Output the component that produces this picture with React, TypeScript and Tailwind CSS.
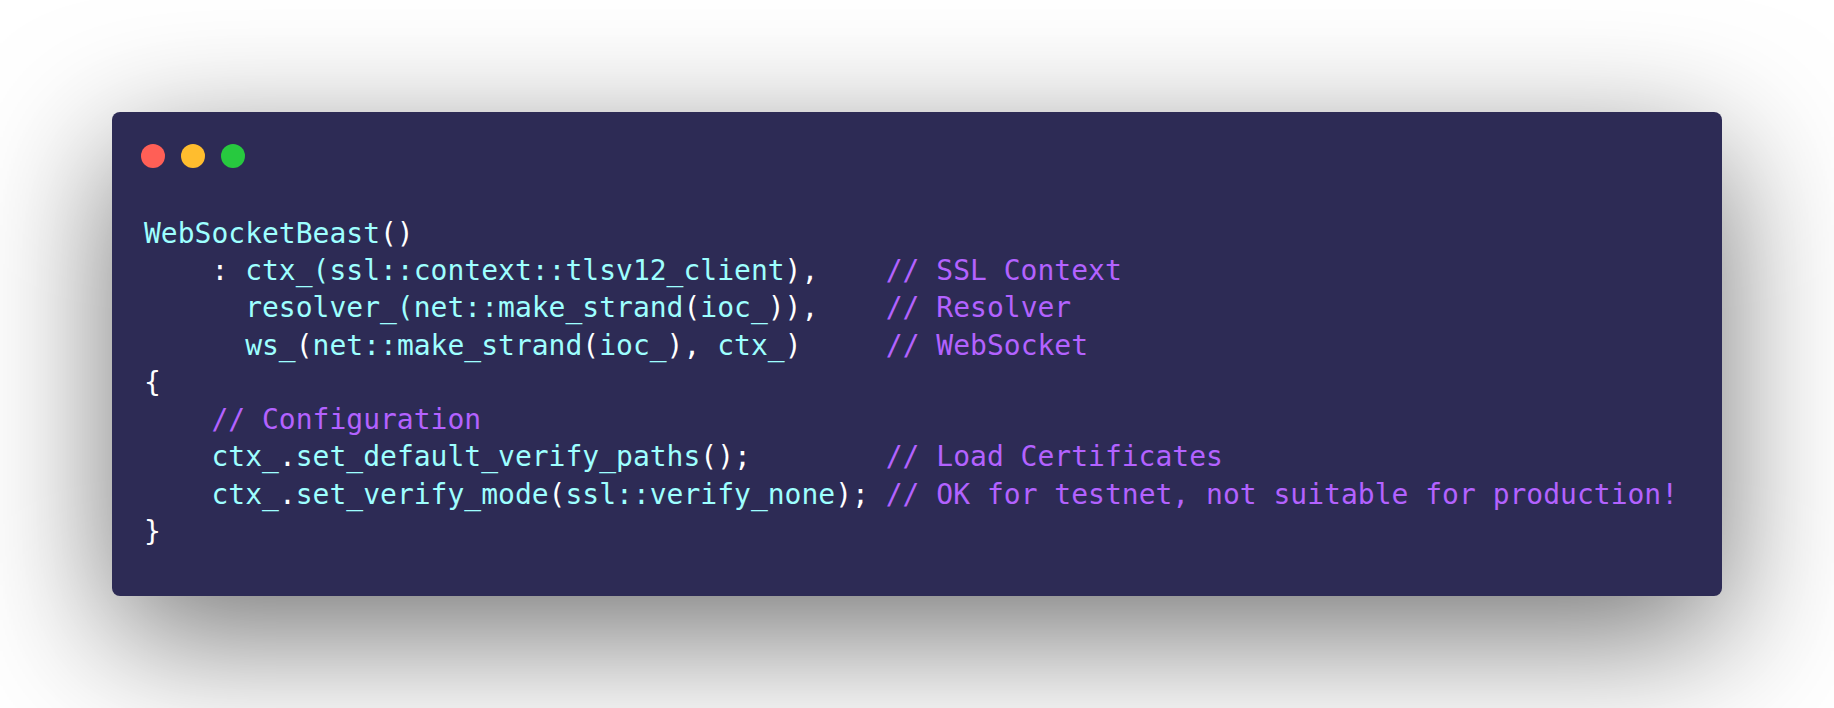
const C = ({ children }: { children: React.ReactNode }) => (
  <span className="text-[#9effff]">{children}</span>
);
const P = ({ children }: { children: React.ReactNode }) => (
  <span className="text-white">{children}</span>
);
const K = ({ children }: { children: React.ReactNode }) => (
  <span className="text-[#b362ff]">{children}</span>
);

function App() {
  return (
    <div className="min-h-[708px] w-[1834px] bg-white pl-[112px] pt-[112px]">
      {/* Window */}
      <div className="h-[484px] w-[1610px] rounded-[8px] bg-[#2d2b55] shadow-[0_40px_136px_rgba(0,0,0,0.55)]">
        {/* Traffic lights */}
        <div className="flex gap-4 pl-[29px] pt-8">
          <div className="h-6 w-6 rounded-full bg-[#ff5f56]" />
          <div className="h-6 w-6 rounded-full bg-[#ffbd2e]" />
          <div className="h-6 w-6 rounded-full bg-[#27c93f]" />
        </div>

        {/* Code */}
        <pre className="mt-[47px] pl-8 font-['DejaVu_Sans_Mono',monospace] text-[28px] leading-[37.24px] whitespace-pre">
          <div>
            <C>WebSocketBeast</C>
            <P>()</P>
          </div>
          <div>
            <P>{"    : "}</P>
            <C>ctx_(ssl::context::tlsv12_client</C>
            <P>{"),    "}</P>
            <K>// SSL Context</K>
          </div>
          <div>
            <P>{"      "}</P>
            <C>resolver_(net::make_strand</C>
            <P>(</P>
            <C>ioc_</C>
            <P>{")),    "}</P>
            <K>// Resolver</K>
          </div>
          <div>
            <P>{"      "}</P>
            <C>ws_</C>
            <P>(</P>
            <C>net::make_strand</C>
            <P>(</P>
            <C>ioc_</C>
            <P>{"), "}</P>
            <C>ctx_</C>
            <P>{")     "}</P>
            <K>// WebSocket</K>
          </div>
          <div>
            <P>{"{"}</P>
          </div>
          <div>
            <K>{"    // Configuration"}</K>
          </div>
          <div>
            <P>{"    "}</P>
            <C>ctx_</C>
            <P>.</P>
            <C>set_default_verify_paths</C>
            <P>{"();        "}</P>
            <K>// Load Certificates</K>
          </div>
          <div>
            <P>{"    "}</P>
            <C>ctx_</C>
            <P>.</P>
            <C>set_verify_mode</C>
            <P>(</P>
            <C>ssl::verify_none</C>
            <P>{"); "}</P>
            <K>// OK for testnet, not suitable for production!</K>
          </div>
          <div>
            <P>{"}"}</P>
          </div>
        </pre>
      </div>
    </div>
  );
}

export default App;
